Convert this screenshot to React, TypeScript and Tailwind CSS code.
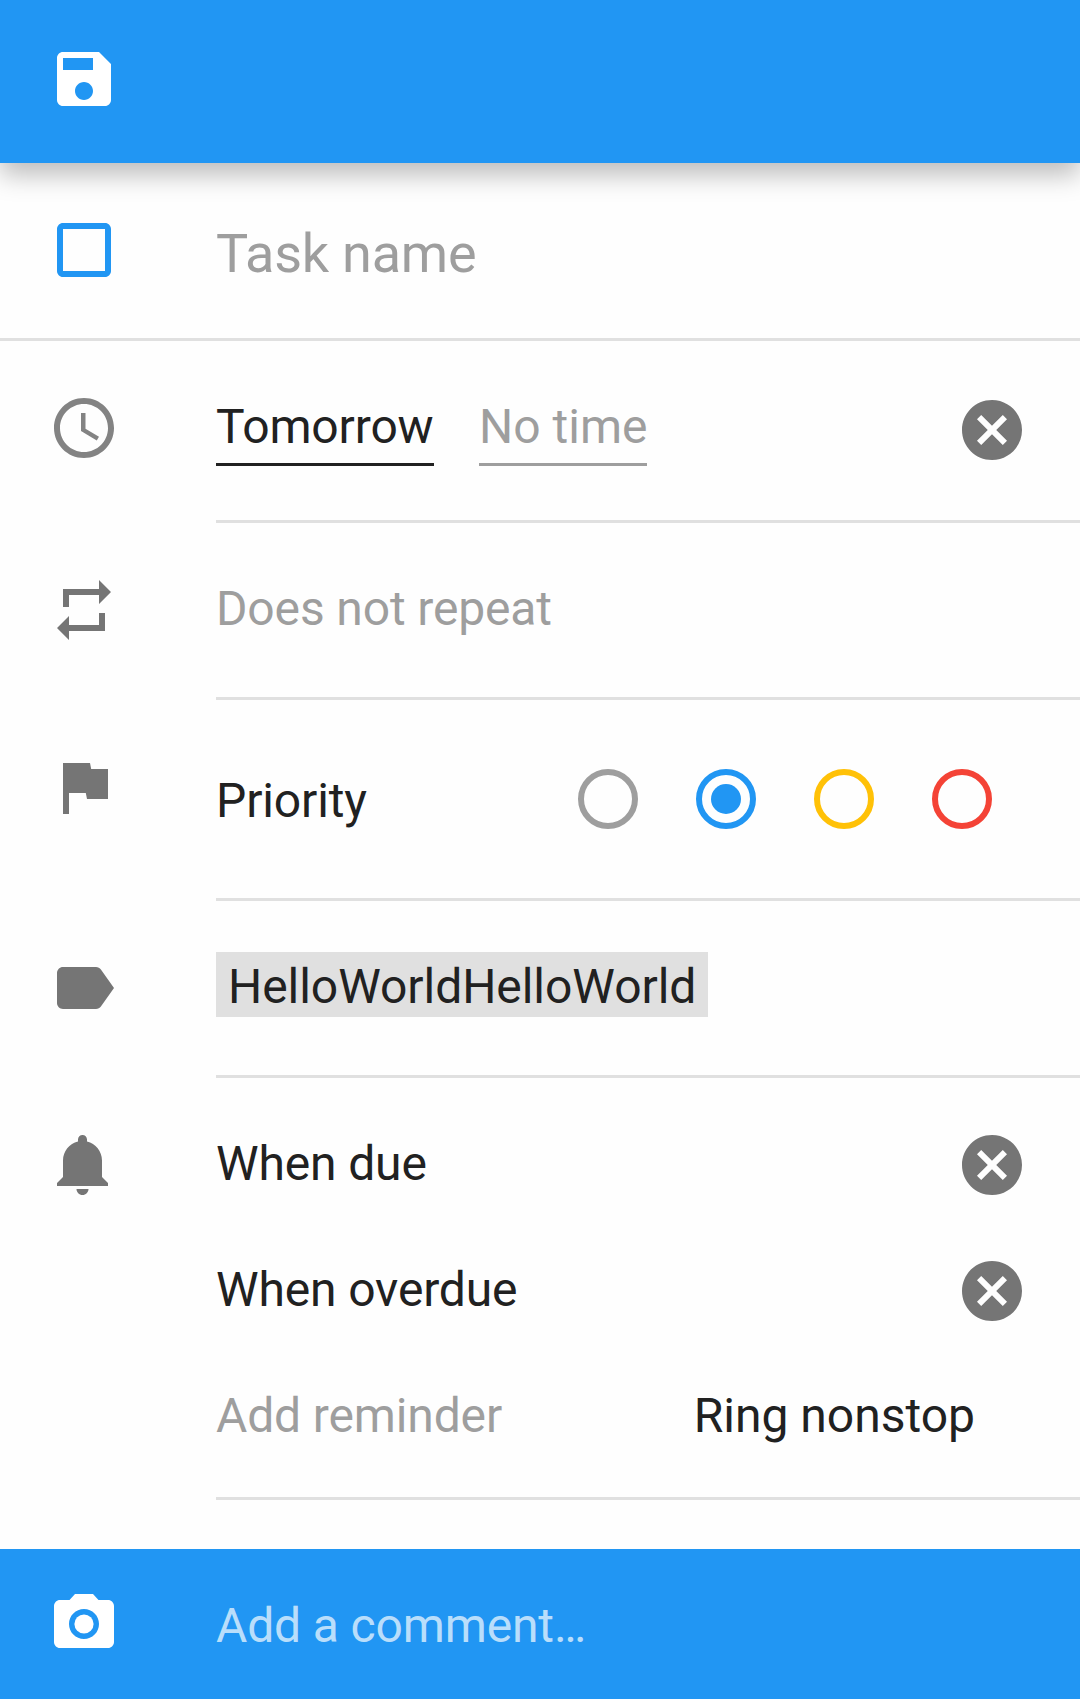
import type { ReactNode } from 'react';

const PATHS = {
  save: 'M17 3H5c-1.11 0-2 .9-2 2v14c0 1.1.89 2 2 2h14c1.1 0 2-.9 2-2V7l-4-4zm-5 16c-1.66 0-3-1.34-3-3s1.34-3 3-3 3 1.34 3 3-1.34 3-3 3zm3-10H5V5h10v4z',
  checkbox: 'M19 5v14H5V5h14m0-2H5c-1.1 0-2 .9-2 2v14c0 1.1.9 2 2 2h14c1.1 0 2-.9 2-2V5c0-1.1-.9-2-2-2z',
  clock: 'M11.99 2C6.47 2 2 6.48 2 12s4.47 10 9.99 10C17.52 22 22 17.52 22 12S17.52 2 11.99 2zM12 20c-4.42 0-8-3.58-8-8s3.58-8 8-8 8 3.58 8 8-3.58 8-8 8zM12.5 7H11v6l5.25 3.15.75-1.23-4.5-2.67z',
  repeat: 'M7 7h10v3l4-4-4-4v3H5v6h2V7zm10 10H7v-3l-4 4 4 4v-3h12v-6h-2v4z',
  flag: 'M14.4 6L14 4H5v17h2v-7h5.6l.4 2h7V6z',
  label: 'M17.63 5.84C17.27 5.33 16.67 5 16 5L5 5.01C3.9 5.01 3 5.9 3 7v10c0 1.1.9 1.99 2 1.99L16 19c.67 0 1.27-.33 1.63-.84L22 12l-4.37-6.16z',
  bell: 'M11.5 22c1.1 0 2-.9 2-2h-4c0 1.1.9 2 2 2zm6.5-6v-5.5c0-3.07-2.13-5.64-5-6.32V3.5c0-.83-.67-1.5-1.5-1.5S10 2.67 10 3.5v.68c-2.87.68-5 3.25-5 6.32V16l-2 2v1h17v-1l-2-2z',
  cancel: 'M12 2C6.47 2 2 6.47 2 12s4.47 10 10 10 10-4.47 10-10S17.53 2 12 2zm5 13.59L15.59 17 12 13.41 8.41 17 7 15.59 10.59 12 7 8.41 8.41 7 12 10.59 15.59 7 17 8.41 13.41 12 17 15.59z',
  camera: 'M9 2L7.17 4H4c-1.1 0-2 .9-2 2v12c0 1.1.9 2 2 2h16c1.1 0 2-.9 2-2V6c0-1.1-.9-2-2-2h-3.17L15 2H9zm3 15c-2.76 0-5-2.24-5-5s2.24-5 5-5 5 2.24 5 5-2.24 5-5 5z',
};

function Icon({ name, className }: { name: keyof typeof PATHS; className: string }) {
  return (
    <svg viewBox="0 0 24 24" className={`size-[72px] shrink-0 fill-current ${className}`}>
      <path d={PATHS[name]} />
      {name === 'camera' && <circle cx="12" cy="12" r="3.2" />}
    </svg>
  );
}

/* A settings row: leading icon, then content above an inset divider. */
function Row({ icon, iconClass, className, children }: {
  icon: keyof typeof PATHS;
  iconClass: string;
  className: string;
  children: ReactNode;
}) {
  return (
    <section className="flex pl-12">
      <Icon name={icon} className={iconClass} />
      <div className={`ml-24 flex flex-1 border-b-3 border-[#e0e0e0] ${className}`}>{children}</div>
    </section>
  );
}

function Radio({ color, selected }: { color: string; selected?: boolean }) {
  return (
    <span className={`flex size-[60px] items-center justify-center rounded-full border-6 border-current ${color}`}>
      {selected && <span className="size-[30px] rounded-full bg-current" />}
    </span>
  );
}

function Reminder({ text }: { text: string }) {
  return (
    <div className="flex h-[126px] items-start justify-between pr-[52px]">
      <span className="pt-[3px]">{text}</span>
      <Icon name="cancel" className="text-[#757575]" />
    </div>
  );
}

export default function App() {
  return (
    <main className="flex h-[1699px] w-[1080px] flex-col overflow-hidden bg-[#fefefe] font-['Roboto',sans-serif] text-[48px] leading-[64px] tracking-[-0.14px] whitespace-nowrap text-[#212121]">
      <header className="z-10 flex h-[163px] shrink-0 bg-[#2196f3] pt-[43px] pl-12 shadow-[0_12px_24px_rgba(0,0,0,0.26)]">
        <Icon name="save" className="text-white" />
      </header>

      <section className="flex h-[178px] border-b-3 border-[#e0e0e0] pl-12">
        <Icon name="checkbox" className="mt-[51px] text-[#2196f3]" />
        <span className="ml-24 pt-[59px] text-[54px] tracking-[-0.24px] text-[#9e9e9e]">Task name</span>
      </section>

      <Row icon="clock" iconClass="mt-[51px] text-[#838383]" className="h-[182px] pt-[54px] pr-[52px]">
        <span className="h-[71px] w-[218px] border-b-3 border-[#212121]">Tomorrow</span>
        <span className="ml-[45px] h-[71px] w-[168px] border-b-3 border-[#9e9e9e] tracking-normal text-[#9e9e9e]">No time</span>
        <Icon name="cancel" className="-mt-px ml-auto text-[#757575]" />
      </Row>

      <Row icon="repeat" iconClass="mt-[51px] text-[#757575]" className="h-[177px] pt-[54px] text-[#9e9e9e]">
        <span>Does not repeat</span>
      </Row>

      <Row icon="flag" iconClass="mt-[51px] text-[#757575]" className="h-[201px] justify-between pt-[69px] pr-[88px]">
        <span>Priority</span>
        <div className="flex gap-[58px]">
          <Radio color="text-[#9e9e9e]" />
          <Radio color="text-[#2196f3]" selected />
          <Radio color="text-[#ffc107]" />
          <Radio color="text-[#f44336]" />
        </div>
      </Row>

      <Row icon="label" iconClass="mt-[51px] text-[#757575]" className="h-[177px] pt-[51px]">
        <span className="h-[65px] w-[492px] bg-[#e0e0e0] px-3 pt-[3px] tracking-[-0.05px]">HelloWorldHelloWorld</span>
      </Row>

      <Row icon="bell" iconClass="mt-[51px] text-[#757575]" className="h-[422px] flex-col pt-[51px]">
        <Reminder text="When due" />
        <Reminder text="When overdue" />
        <div className="flex justify-between pt-[3px] pr-[105px]">
          <span className="text-[#9e9e9e]">Add reminder</span>
          <span className="tracking-normal">Ring nonstop</span>
        </div>
      </Row>

      <footer className="mt-auto flex h-[150px] bg-[#2196f3] pl-12">
        <Icon name="camera" className="mt-[39px] text-white" />
        <span className="ml-24 pt-[45px] text-white/70">Add a comment…</span>
      </footer>
    </main>
  );
}
